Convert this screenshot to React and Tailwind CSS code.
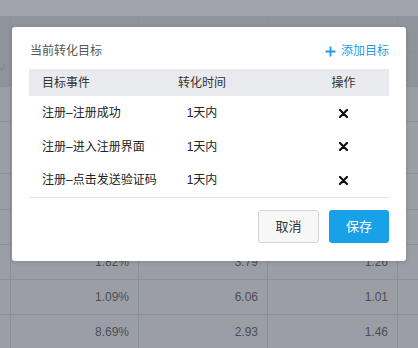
import React from "react";

const font = { fontFamily: '"Liberation Sans", "Noto Sans CJK SC", sans-serif' };

// dimmed table under the dialog
const bgRows = [
	{ h: "h-[36px]", link: "", vals: ["", "", ""], dark: true },
	{ h: "h-[35px]", link: "", vals: ["", "", ""], dark: true },
	{ h: "h-[35px]", link: "渠道2", vals: ["3.15%", "4.02", "1.33"] },
	{ h: "h-[52px]", link: "渠道3", vals: ["2.47%", "5.11", "1.18"] },
	{ h: "h-[36px]", link: "渠道4", vals: ["0.96%", "3.40", "1.07"] },
	{ h: "h-[35px]", link: "渠道5", vals: ["4.28%", "2.77", "1.39"] },
	{ h: "h-[35px]", link: "渠道6", vals: ["1.82%", "3.79", "1.26"] },
	{ h: "h-[35px]", link: "渠道7", vals: ["1.09%", "6.06", "1.01"] },
	{ h: "h-[35px]", link: "渠道8", vals: ["8.69%", "2.93", "1.46"] },
];

const goals = [
	{ name: "注册–注册成功", time: "1天内", h: "h-[34px]" },
	{ name: "注册–进入注册界面", time: "1天内", h: "h-[33px]" },
	{ name: "注册–点击发送验证码", time: "1天内", h: "h-[34px]" },
];

function CloseIcon() {
	return (
		<svg width="9" height="9" viewBox="0 0 9 9" fill="none">
			<path d="M1 1L8 8M8 1L1 8" stroke="#111" strokeWidth="2.2" strokeLinecap="round" />
		</svg>
	);
}

function PlusIcon() {
	return (
		<svg width="11" height="11" viewBox="0 0 11 11" fill="none">
			<path d="M5.5 0.5V10.5M0.5 5.5H10.5" stroke="#1f9be6" strokeWidth="1.8" />
		</svg>
	);
}

export default function App() {
	return (
		<div className="relative w-[418px] h-[348px] overflow-hidden bg-[#9b9ea5]" style={font}>
			{/* START: background page */}
			<div className="h-[16px] bg-[#a1a4aa]" />
			{bgRows.map((row, i) => (
				<div
					key={i}
					className={`flex border-b border-[#8b8f96] ${row.h} ${row.dark ? "bg-[#8f939a]" : "bg-[#9b9ea5]"}`}
				>
					<div className="w-[11px] shrink-0 border-r border-[#8b8f96] overflow-hidden flex items-center justify-end relative">
						{i === 1 && <span className="absolute left-[-3px] text-[9px] text-[#7d8189]">∨</span>}
						<span className="whitespace-nowrap pr-[10px] text-[12px] text-[#5a88b0]">{row.link}</span>
					</div>
					{row.vals.map((v, j) => (
						<div
							key={j}
							className={`shrink-0 border-r border-[#8b8f96] flex items-center justify-end pr-[9px] text-[12px] text-[#4b4f57] ${
								j === 0 ? "w-[128px]" : j === 1 ? "w-[129px]" : "w-[130px]"
							}`}
						>
							{v}
						</div>
					))}
					<div className="flex-1" />
				</div>
			))}
			{/* END: background page */}

			{/* START: dialog */}
			<div className="absolute left-[12px] top-[27px] w-[394px] bg-white rounded-[3px] shadow-[0_1px_4px_rgba(0,0,0,0.15)] px-[17px] pt-[14px] pb-[18px]">
				<div className="flex items-center justify-between h-[20px] pl-px">
					<span className="text-[12px] text-[#555]">当前转化目标</span>
					<button type="button" className="flex items-center gap-[5px] text-[12px] text-[#1f9be6]">
						<PlusIcon />
						<span>添加目标</span>
					</button>
				</div>

				<div className="mt-[8px] h-[27px] flex items-center bg-[#e9eaed] text-[12px] text-[#333]">
					<div className="w-[119px] pl-[13px]">目标事件</div>
					<div className="w-[108px] text-center">转化时间</div>
					<div className="ml-auto w-[91px] text-center">操作</div>
				</div>

				{goals.map((g) => (
					<div key={g.name} className={`${g.h} flex items-center text-[12px] text-[#222]`}>
						<div className="w-[119px] pl-[13px] whitespace-nowrap">{g.name}</div>
						<div className="w-[108px] text-center">{g.time}</div>
						<div className="ml-auto w-[91px] flex justify-center">
							<CloseIcon />
						</div>
					</div>
				))}
				<div className="h-px bg-[#e3e3e3]" />

				<div className="mt-[12px] flex justify-end gap-[10px]">
					<button
						type="button"
						className="w-[61px] h-[33px] rounded-[3px] border border-[#d4d4d4] bg-[#f7f7f7] text-[13px] text-[#333]"
					>
						取消
					</button>
					<button type="button" className="w-[60px] h-[33px] rounded-[3px] bg-[#18a1e8] text-[13px] text-white">
						保存
					</button>
				</div>
			</div>
			{/* END: dialog */}
		</div>
	);
}
